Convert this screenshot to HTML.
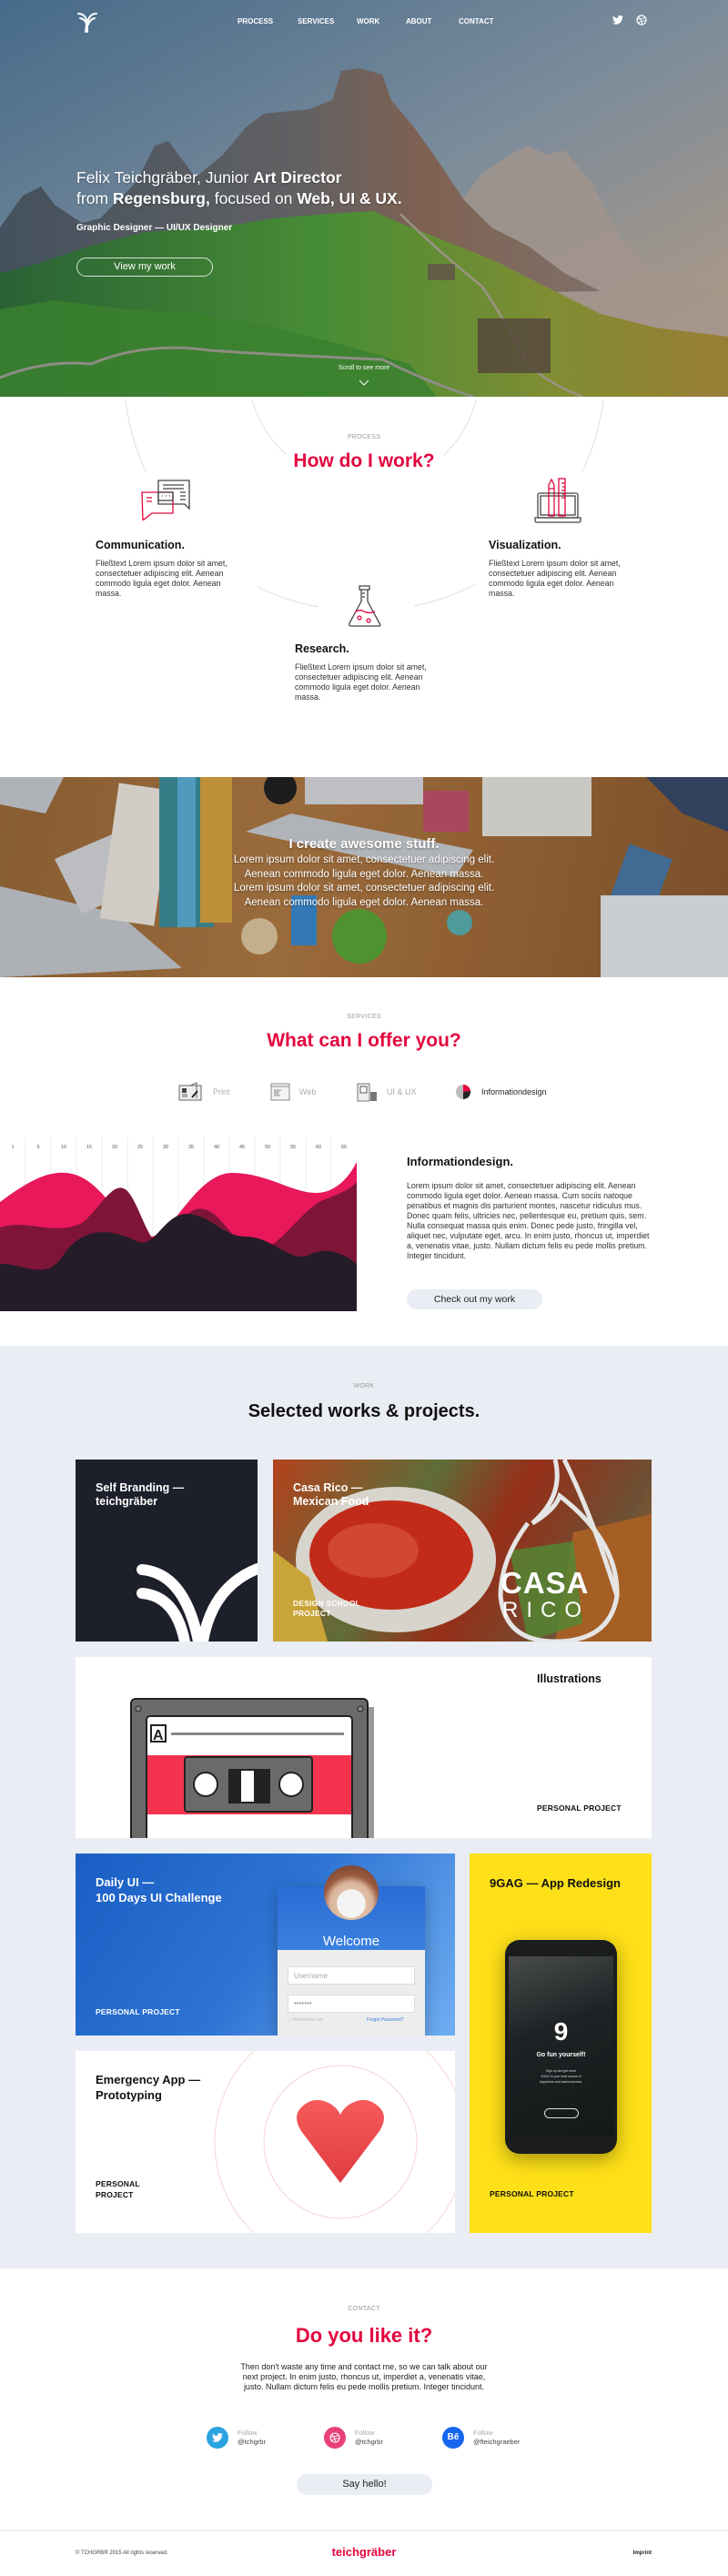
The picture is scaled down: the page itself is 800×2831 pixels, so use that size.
<!DOCTYPE html>
<html><head><meta charset="utf-8">
<style>
*{margin:0;padding:0;box-sizing:border-box}
body{width:800px;height:2831px;position:relative;font-family:"Liberation Sans",sans-serif;background:#fff;overflow:hidden;color:#222}
.a{position:absolute}
.lbl{position:absolute;left:0;width:800px;text-align:center;font-size:7px;color:#9a9a9a;letter-spacing:.3px}
.h2{position:absolute;left:0;width:800px;text-align:center;font-size:21px;font-weight:bold;color:#e3063f}
.t{font-size:12.5px;font-weight:bold;color:#111}
.p{font-size:8.8px;line-height:11px;color:#333}
.nav{position:absolute;top:19px;font-size:8px;font-weight:bold;color:#fff}
.ct{position:absolute;font-size:12.5px;font-weight:bold;line-height:15px}
.pp{position:absolute;font-size:8.5px;font-weight:bold;letter-spacing:.2px}
</style></head><body>

<!-- HERO -->
<div class="a" style="left:0;top:0;width:800px;height:436px;overflow:hidden">
<svg width="800" height="436" viewBox="0 0 800 436">
<defs>
<linearGradient id="sky" x1="0" y1="0" x2="1" y2="1"><stop offset="0" stop-color="#4d7497"/><stop offset=".5" stop-color="#8598a8"/><stop offset="1" stop-color="#c9a98e"/></linearGradient>
<linearGradient id="rock" x1="0" y1="0" x2="1" y2="0"><stop offset="0" stop-color="#4a5866"/><stop offset=".5" stop-color="#6a6a6c"/><stop offset=".7" stop-color="#8a6a5a"/><stop offset="1" stop-color="#8a7a72"/></linearGradient>
<linearGradient id="gr" x1="0" y1="0" x2="1" y2="0"><stop offset="0" stop-color="#2e6a3a"/><stop offset=".45" stop-color="#4e9a3a"/><stop offset=".75" stop-color="#8a9a38"/><stop offset="1" stop-color="#a8883a"/></linearGradient>
</defs>
<rect width="800" height="436" fill="url(#sky)"/>
<path d="M470 250 L500 230 L530 190 L560 170 L580 160 L600 170 L620 165 L650 200 L680 260 L720 300 L760 310 L800 330 L800 436 L470 436Z" fill="#b2a298" opacity=".75"/>
<path d="M0 250 L25 215 L45 205 L60 225 L90 245 L110 240 L150 200 L170 160 L185 155 L200 175 L215 195 L245 170 L270 140 L290 125 L340 120 L365 110 L375 78 L395 75 L420 82 L430 110 L455 140 L480 175 L510 220 L540 250 L580 270 L620 300 L660 320 L0 330Z" fill="url(#rock)"/>
<path d="M0 300 L40 290 L100 270 L160 255 L240 250 L300 240 L360 235 L410 232 L440 245 L490 265 L540 285 L600 315 L660 345 L720 360 L800 370 L800 436 L0 436Z" fill="url(#gr)"/>
<path d="M0 340 L60 330 L140 340 L220 345 L300 360 L380 380 L450 400 L480 436 L0 436Z" fill="#3f8c34" opacity=".85"/>
<path d="M0 415 Q50 395 100 400 Q160 375 230 385 Q300 390 420 395 Q470 420 520 436" stroke="#9a9a90" stroke-width="3" fill="none"/>
<path d="M440 235 Q480 275 530 315 Q560 360 580 400 Q600 420 640 436" stroke="#a8a090" stroke-width="2.5" fill="none"/>
<rect x="525" y="350" width="80" height="60" fill="#5a4a40" opacity=".8"/>
<rect x="470" y="290" width="30" height="18" fill="#6a5a50" opacity=".8"/>
<rect width="800" height="436" fill="#000" opacity=".08"/>
</svg>
</div>
<svg class="a" style="left:84px;top:11px" width="24" height="25" viewBox="0 0 24 25"><path d="M2 4 Q10 4 12 14 M4 9 Q10 10 11 16 L10 24 M22 4 Q14 4 12 14 L12 24 M20 9 Q15 10 13 16" stroke="#fff" stroke-width="2" fill="none" stroke-linecap="round"/></svg>
<div class="nav" style="left:261px">PROCESS</div>
<div class="nav" style="left:327px">SERVICES</div>
<div class="nav" style="left:392px">WORK</div>
<div class="nav" style="left:446px">ABOUT</div>
<div class="nav" style="left:504px">CONTACT</div>
<svg class="a" style="left:673px;top:17px" width="12" height="10" viewBox="0 0 24 20"><path d="M24 2.4a10 10 0 0 1-2.8.8A5 5 0 0 0 23.3.4a10 10 0 0 1-3.1 1.2A4.9 4.9 0 0 0 11.8 6 14 14 0 0 1 1.7.9a4.9 4.9 0 0 0 1.5 6.6 4.9 4.9 0 0 1-2.2-.6A4.9 4.9 0 0 0 4.9 11.7a5 5 0 0 1-2.2.1 4.9 4.9 0 0 0 4.6 3.4A9.9 9.9 0 0 1 0 17.2 14 14 0 0 0 7.5 19.4c9.1 0 14-7.5 14-14v-.6A10 10 0 0 0 24 2.4z" fill="#fff"/></svg>
<svg class="a" style="left:699px;top:16px" width="12" height="12" viewBox="0 0 12 12"><circle cx="6" cy="6" r="5" stroke="#fff" stroke-width="1.2" fill="none"/><path d="M3 2.5 Q6 6 7 11 M1.2 5 Q6 5.5 10 3 M2.5 9.5 Q6 6 10.8 7" stroke="#fff" stroke-width=".9" fill="none"/></svg>

<div class="a" style="left:84px;top:184px;font-size:17.5px;line-height:23px;color:#fff;text-shadow:0 1px 2px rgba(0,0,0,.3)">Felix Teichgräber, Junior <b>Art Director</b><br>from <b>Regensburg,</b> focused on <b>Web, UI &amp; UX.</b></div>
<div class="a" style="left:84px;top:245px;font-size:10px;font-weight:bold;color:#fff">Graphic Designer — UI/UX Designer</div>
<div class="a" style="left:84px;top:283px;width:150px;height:21px;border:1px solid rgba(255,255,255,.8);border-radius:11px;color:#fff;font-size:11px;text-align:center;line-height:19px">View my work</div>
<div class="a" style="left:0;width:800px;top:401px;text-align:center;font-size:7px;color:#fff">Scroll to see more</div>
<svg class="a" style="left:394px;top:417px" width="12" height="7" viewBox="0 0 12 7"><path d="M1 1 L6 6 L11 1" stroke="#fff" stroke-width="1" fill="none"/></svg>

<!-- PROCESS -->
<svg class="a" style="left:0;top:436px" width="800" height="300" viewBox="0 436 800 300">
<g stroke="#e4e4e4" stroke-width="1.2" fill="none">
<path d="M138 440 A264 264 0 0 0 160 518"/>
<path d="M663 440 A264 264 0 0 1 640 518"/>
<path d="M283 645 A264 264 0 0 0 350 667"/>
<path d="M455 666 A264 264 0 0 0 523 642"/>
<path d="M277 440 A128 128 0 0 0 315 500"/>
<path d="M523 440 A128 128 0 0 1 488 500"/>
</g></svg>
<div class="lbl" style="top:477px">PROCESS</div>
<div class="h2" style="top:495px">How do I work?</div>
<svg class="a" style="left:155px;top:527px" width="56" height="45" viewBox="0 0 56 45"><g fill="none" stroke-width="1.3"><path d="M19 1 H53 V32 L48 27 H19Z" stroke="#444"/><path d="M24 6 H47 M24 10 H47 M43 14 H49 M43 18 H49 M43 22 H49" stroke="#444"/><path d="M1 14 H35 V37 H12 L2 45 Z" stroke="#e3063f"/><path d="M6 20 H12 M6 24 H12" stroke="#e3063f"/><rect x="19" y="14" width="16" height="9" stroke="#444"/><path d="M23 18 H24 M27 18 H28 M31 18 H32" stroke="#444"/></g></svg>
<svg class="a" style="left:587px;top:525px" width="52" height="50" viewBox="0 0 52 50"><g fill="none" stroke-width="1.3"><rect x="4" y="17" width="44" height="27" rx="2" stroke="#444"/><rect x="7" y="20" width="38" height="21" stroke="#444"/><path d="M1 44 H51 V47 Q51 49 49 49 H3 Q1 49 1 47Z" stroke="#444"/><path d="M16 8 L19 2 L22 8 V42 H16Z M16 12 H22" stroke="#e3063f"/><rect x="27" y="1" width="7" height="41" stroke="#e3063f"/><path d="M30 6 H34 M31 10 H34 M30 14 H34 M31 18 H34 M30 22 H34" stroke="#e3063f"/></g></svg>
<svg class="a" style="left:382px;top:643px" width="38" height="47" viewBox="0 0 38 47"><g fill="none" stroke-width="1.3"><path d="M13 1 H24 V5 H13Z" stroke="#444"/><path d="M15 5 V18 L2 42 Q1 45 4 45 H34 Q37 45 35 42 L22 18 V5" stroke="#444"/><path d="M16 9 H19 M16 13 H19" stroke="#444"/><path d="M8 30 Q13 26 18 29 Q24 32 30 29" stroke="#e3063f"/><circle cx="13" cy="36" r="2" stroke="#e3063f"/><circle cx="23" cy="39" r="2" stroke="#e3063f"/></g></svg>
<div class="a t" style="left:105px;top:592px">Communication.</div>
<div class="a p" style="left:105px;top:614px;width:160px">Fließtext Lorem ipsum dolor sit amet, consectetuer adipiscing elit. Aenean commodo ligula eget dolor. Aenean massa.</div>
<div class="a t" style="left:537px;top:592px">Visualization.</div>
<div class="a p" style="left:537px;top:614px;width:160px">Fließtext Lorem ipsum dolor sit amet, consectetuer adipiscing elit. Aenean commodo ligula eget dolor. Aenean massa.</div>
<div class="a t" style="left:324px;top:706px">Research.</div>
<div class="a p" style="left:324px;top:728px;width:160px">Fließtext Lorem ipsum dolor sit amet, consectetuer adipiscing elit. Aenean commodo ligula eget dolor. Aenean massa.</div>

<!-- DESK PHOTO -->
<div class="a" style="left:0;top:854px;width:800px;height:220px;overflow:hidden;background:linear-gradient(100deg,#9a6a3a,#b07a44 40%,#a06a38 70%,#8a5a30)">
<svg width="800" height="220" viewBox="0 0 800 220">
<path d="M0 0 L70 0 L50 40 L0 30Z" fill="#c8ccd2"/>
<path d="M0 120 L130 150 L200 210 L0 220Z" fill="#c5c9cf"/>
<path d="M60 90 L130 60 L160 120 L90 150Z" fill="#d6d8dc"/>
<rect x="120" y="10" width="60" height="150" fill="#eeeae2" transform="rotate(8 150 85)"/>
<rect x="175" y="0" width="60" height="165" fill="#3f8f9a"/>
<rect x="195" y="0" width="20" height="165" fill="#5ab0d8"/>
<rect x="220" y="0" width="35" height="160" fill="#d9a640"/>
<circle cx="308" cy="12" r="18" fill="#222"/>
<rect x="335" y="0" width="130" height="30" fill="#d9dade"/>
<path d="M270 60 L320 40 L520 80 L500 110Z" fill="#c9ccd1"/>
<rect x="530" y="0" width="120" height="65" fill="#e6e4de"/>
<rect x="465" y="15" width="50" height="45" fill="#c84a7a" opacity=".8"/>
<rect x="680" y="80" width="50" height="60" fill="#4a7aa8" transform="rotate(20 705 110)"/>
<path d="M710 0 L800 0 L800 60 L750 40Z" fill="#3a4a6a"/>
<rect x="660" y="130" width="140" height="90" fill="#e6eaf0"/>
<circle cx="395" cy="175" r="30" fill="#5aa838"/>
<rect x="320" y="130" width="28" height="55" fill="#3a8ad0"/>
<circle cx="285" cy="175" r="20" fill="#e0c8a0"/>
<circle cx="505" cy="160" r="14" fill="#5ab0b0"/>
<rect width="800" height="220" fill="#000" opacity=".12"/>
</svg>
</div>
<div class="a" style="left:0;top:919px;width:800px;text-align:center;color:#fff;font-size:15px;font-weight:bold;text-shadow:0 1px 2px rgba(0,0,0,.4)">I create awesome stuff.</div>
<div class="a" style="left:0;top:938px;width:800px;text-align:center;color:#fff;font-size:11.5px;line-height:15.5px;text-shadow:0 1px 2px rgba(0,0,0,.4)">Lorem ipsum dolor sit amet, consectetuer adipiscing elit.<br>Aenean commodo ligula eget dolor. Aenean massa.<br>Lorem ipsum dolor sit amet, consectetuer adipiscing elit.<br>Aenean commodo ligula eget dolor. Aenean massa.</div>

<!-- SERVICES -->
<div class="lbl" style="top:1114px">SERVICES</div>
<div class="h2" style="top:1132px">What can I offer you?</div>
<svg class="a" style="left:196px;top:1189px" width="26" height="21" viewBox="0 0 26 21"><rect x="1" y="4" width="24" height="16" fill="#eee" stroke="#666"/><rect x="4" y="7" width="5" height="5" fill="#444"/><path d="M4 14 H10 M4 16 H10 M13 4 L20 1 V18" stroke="#666" fill="none"/><path d="M15 17 L21 10" stroke="#222" stroke-width="2"/></svg>
<div class="a" style="left:234px;top:1195px;font-size:9px;color:#aaa">Print</div>
<svg class="a" style="left:297px;top:1190px" width="22" height="20" viewBox="0 0 22 20"><rect x="1" y="1" width="20" height="18" fill="#f4f4f4" stroke="#888"/><path d="M1 4 H21 M4 8 H12 M4 10 H10 M4 12 H9 M4 14 H11" stroke="#888" fill="none"/></svg>
<div class="a" style="left:329px;top:1195px;font-size:9px;color:#aaa">Web</div>
<svg class="a" style="left:392px;top:1190px" width="23" height="21" viewBox="0 0 23 21"><rect x="1" y="1" width="13" height="19" fill="#eee" stroke="#777"/><rect x="4" y="4" width="7" height="7" fill="#fff" stroke="#555"/><rect x="15" y="10" width="7" height="10" fill="#777"/></svg>
<div class="a" style="left:425px;top:1195px;font-size:9px;color:#aaa">UI &amp; UX</div>
<svg class="a" style="left:500px;top:1190px" width="18" height="20" viewBox="0 0 18 20"><circle cx="9" cy="10" r="8" fill="#bbb"/><path d="M9 10 L9 2 A8 8 0 0 1 17 9Z" fill="#e3063f"/><path d="M9 10 L17 9 A8 8 0 0 1 9 18Z" fill="#222"/></svg>
<div class="a" style="left:529px;top:1195px;font-size:9px;color:#222">Informationdesign</div>

<svg class="a" style="left:0;top:1249px" width="392" height="192" viewBox="0 0 392 192">
<rect width="392" height="192" fill="#fff"/>
<g stroke="#ececec" stroke-width="1"><path d="M28 0V192M56 0V192M84 0V192M112 0V192M140 0V192M168 0V192M196 0V192M224 0V192M252 0V192M280 0V192M308 0V192M336 0V192M364 0V192"/></g>
<g font-size="5.5" fill="#555" text-anchor="middle" font-family="Liberation Sans"><text x="14" y="13">1</text><text x="42" y="13">5</text><text x="70" y="13">10</text><text x="98" y="13">15</text><text x="126" y="13">20</text><text x="154" y="13">25</text><text x="182" y="13">30</text><text x="210" y="13">35</text><text x="238" y="13">40</text><text x="266" y="13">45</text><text x="294" y="13">50</text><text x="322" y="13">55</text><text x="350" y="13">60</text><text x="378" y="13">65</text></g>
<path d="M0 72 C30 50 60 30 90 45 C120 60 140 110 165 110 C190 110 215 40 255 40 C300 40 330 70 360 60 C380 52 388 35 392 28 V192 H0Z" fill="#e8185a"/>
<path d="M0 100 C30 90 60 110 90 95 C110 80 125 45 140 60 C150 70 160 105 170 115 C185 115 200 85 215 80 C240 75 250 110 275 125 C300 135 330 80 355 70 C375 62 385 58 392 50 V192 H0Z" fill="#7e1538"/>
<path d="M0 140 C30 140 50 160 70 130 C90 100 120 100 150 115 C170 125 180 85 205 85 C230 85 245 110 270 110 C300 110 320 140 340 130 C360 120 380 130 392 140 V192 H0Z" fill="#241c28"/>
</svg>
<div class="a t" style="left:447px;top:1269px;font-size:13px">Informationdesign.</div>
<div class="a p" style="left:447px;top:1298px;width:275px">Lorem ipsum dolor sit amet, consectetuer adipiscing elit. Aenean commodo ligula eget dolor. Aenean massa. Cum sociis natoque penatibus et magnis dis parturient montes, nascetur ridiculus mus.<br>Donec quam felis, ultricies nec, pellentesque eu, pretium quis, sem. Nulla consequat massa quis enim. Donec pede justo, fringilla vel, aliquet nec, vulputate eget, arcu. In enim justo, rhoncus ut, imperdiet a, venenatis vitae, justo. Nullam dictum felis eu pede mollis pretium. Integer tincidunt.</div>
<div class="a" style="left:447px;top:1417px;width:149px;height:22px;border-radius:11px;background:#eaedf4;text-align:center;line-height:22px;font-size:10.5px;color:#222">Check out my work</div>

<!-- WORK -->
<div class="a" style="left:0;top:1479px;width:800px;height:1014px;background:#eaedf4"></div>
<div class="lbl" style="top:1520px">WORK</div>
<div class="a" style="left:0;width:800px;text-align:center;top:1540px;font-size:20px;font-weight:bold;color:#111">Selected works &amp; projects.</div>

<div class="a" style="left:83px;top:1604px;width:200px;height:200px;background:#1d1f2b;overflow:hidden">
<svg width="200" height="200" viewBox="0 0 200 200"><g stroke="#fff" stroke-width="12" fill="none" stroke-linecap="round"><path d="M73 121 Q120 125 135 200"/><path d="M73 147 Q110 150 120 200"/><path d="M200 120 Q150 140 140 200"/></g></svg>
<div class="ct" style="left:22px;top:24px;color:#fff">Self Branding —<br>teichgräber</div>
</div>

<div class="a" style="left:300px;top:1604px;width:416px;height:200px;overflow:hidden;background:linear-gradient(120deg,#c84a20,#6a7a40 35%,#a8341c 55%,#7a5a3a 80%,#a87a4a)">
<svg width="416" height="200" viewBox="0 0 416 200">
<ellipse cx="135" cy="110" rx="110" ry="80" fill="#f0ede4"/>
<ellipse cx="130" cy="105" rx="90" ry="60" fill="#d8301c"/>
<ellipse cx="110" cy="100" rx="50" ry="30" fill="#e8503a"/>
<path d="M0 100 L40 130 L60 200 L0 200Z" fill="#e0b840"/>
<path d="M330 80 L416 60 L416 200 L310 200Z" fill="#b86a2a"/>
<path d="M260 100 L330 90 L340 180 L280 200Z" fill="#5a9a3a" opacity=".8"/>
<path d="M310 0 Q320 40 285 70 Q310 55 315 40 Q380 90 378 150 Q370 200 310 200 Q255 200 250 150 Q250 110 280 70" stroke="#fff" stroke-width="5" fill="none"/>
<path d="M320 0 Q350 60 378 150" stroke="#fff" stroke-width="5" fill="none"/>
<rect width="416" height="200" fill="#000" opacity=".1"/>
</svg>
<div class="a" style="left:250px;top:117px;color:#fff;font-size:33px;font-weight:bold;letter-spacing:1px">CASA</div>
<div class="a" style="left:252px;top:152px;color:#fff;font-size:24px;letter-spacing:9px">RICO</div>
<div class="ct" style="left:22px;top:24px;color:#fff">Casa Rico —<br>Mexican Food</div>
<div class="pp" style="left:22px;top:153px;color:#fff;line-height:11px">DESIGN SCHOOL<br>PROJECT</div>
</div>

<div class="a" style="left:83px;top:1821px;width:633px;height:199px;background:#fff;overflow:hidden">
<svg class="a" style="left:60px;top:45px" width="275" height="160" viewBox="0 0 275 160"><rect x="1" y="1" width="260" height="160" rx="5" fill="#6a6a6a" stroke="#222" stroke-width="2"/><rect x="262" y="10" width="6" height="150" fill="#999"/><circle cx="9" cy="12" r="3" fill="#888" stroke="#222"/><circle cx="253" cy="12" r="3" fill="#888" stroke="#222"/><rect x="18" y="20" width="226" height="140" rx="4" fill="#fff" stroke="#222" stroke-width="2"/><rect x="19" y="63" width="224" height="65" fill="#f4344f"/><rect x="23" y="30" width="16" height="18" fill="#fff" stroke="#222" stroke-width="2"/><text x="25" y="46" font-size="16" font-weight="bold" font-family="Liberation Sans" fill="#222">A</text><rect x="45" y="38" width="190" height="3" fill="#888"/><rect x="60" y="65" width="140" height="60" rx="3" fill="#6a6a6a" stroke="#222" stroke-width="2"/><circle cx="83" cy="95" r="13" fill="#fff" stroke="#222" stroke-width="2"/><circle cx="177" cy="95" r="13" fill="#fff" stroke="#222" stroke-width="2"/><rect x="108" y="78" width="46" height="38" fill="#222"/><rect x="122" y="80" width="14" height="34" fill="#fff"/></svg>
<div class="a" style="left:507px;top:17px;font-size:12.5px;font-weight:bold;color:#111">Illustrations</div>
<div class="pp" style="left:507px;top:161px;color:#111">PERSONAL PROJECT</div>
</div>

<div class="a" style="left:83px;top:2037px;width:417px;height:200px;overflow:hidden;background:linear-gradient(125deg,#1a5ec4,#2e74d4 50%,#70aef2)">
<div class="a" style="left:222px;top:36px;width:162px;height:170px;background:#ededed;box-shadow:0 4px 16px rgba(0,0,0,.25)"></div>
<div class="a" style="left:222px;top:36px;width:162px;height:70px;background:linear-gradient(#2a6cd4,#3a80e0)"></div>
<div class="a" style="left:273px;top:13px;width:60px;height:60px;border-radius:50%;background:radial-gradient(circle at 50% 70%,#f4f4f4 30%,#e0c0a8 31%,#d8b49a 45%,#9a5a40 60%,#6a3a2a)"></div>
<div class="a" style="left:222px;top:88px;width:162px;text-align:center;color:#fff;font-size:15px">Welcome</div>
<div class="a" style="left:233px;top:124px;width:140px;height:20px;background:#fff;border:1px solid #ddd;font-size:8px;color:#aaa;padding:5px 6px">Username</div>
<div class="a" style="left:233px;top:155px;width:140px;height:20px;background:#fff;border:1px solid #ddd;font-size:8px;color:#999;padding:4px 6px">•••••••</div>
<div class="a" style="left:233px;top:180px;font-size:5px;color:#bbb">▢ Remember me</div>
<div class="a" style="left:320px;top:180px;font-size:5px;color:#3a80e0">Forgot Password?</div>
<div class="ct" style="left:22px;top:23px;color:#fff;font-size:13px;line-height:17px">Daily UI —<br>100 Days UI Challenge</div>
<div class="pp" style="left:22px;top:169px;color:#fff">PERSONAL PROJECT</div>
</div>

<div class="a" style="left:516px;top:2037px;width:200px;height:417px;background:#fde018;overflow:hidden">
<div class="a" style="left:39px;top:95px;width:123px;height:235px;border-radius:16px;background:#1a1c1e;box-shadow:0 6px 20px rgba(0,0,0,.35)"></div>
<div class="a" style="left:43px;top:113px;width:115px;height:198px;background:linear-gradient(160deg,#4a4c4c,#1e2224 40%,#141818)"></div>
<div class="a" style="left:43px;top:180px;width:115px;text-align:center;color:#fff;font-size:28px;font-weight:bold">9</div>
<div class="a" style="left:43px;top:218px;width:115px;text-align:center;color:#fff;font-size:7px;font-weight:bold">Go fun yourself!</div>
<div class="a" style="left:43px;top:236px;width:115px;text-align:center;color:#ddd;font-size:3.5px;line-height:6px">Sign up and get more<br>9GAG is your best source of<br>happiness and awesomeness.</div>
<div class="a" style="left:82px;top:280px;width:38px;height:11px;border:1px solid #ddd;border-radius:6px"></div>
<div class="ct" style="left:22px;top:25px;color:#111;font-size:13px">9GAG — App Redesign</div>
<div class="pp" style="left:22px;top:369px;color:#111">PERSONAL PROJECT</div>
</div>

<div class="a" style="left:83px;top:2254px;width:417px;height:200px;background:#fff;overflow:hidden">
<svg width="417" height="200" viewBox="0 0 417 200"><circle cx="291" cy="100" r="84" fill="none" stroke="#f6d4d4"/><circle cx="291" cy="100" r="138" fill="none" stroke="#f6d4d4"/>
<defs><linearGradient id="hg" x1="0" y1="0" x2="0" y2="1"><stop offset="0" stop-color="#f65a5a"/><stop offset="1" stop-color="#e03c40"/></linearGradient></defs>
<path d="M291 145 L248 88 Q238 72 248 62 Q262 48 280 58 Q288 63 291 70 Q294 63 302 58 Q320 48 334 62 Q344 72 334 88Z" fill="url(#hg)"/></svg>
<div class="ct" style="left:22px;top:23px;color:#111;font-size:13px;line-height:17px">Emergency App —<br>Prototyping</div>
<div class="pp" style="left:22px;top:141px;color:#111;line-height:11.5px">PERSONAL<br>PROJECT</div>
</div>

<!-- CONTACT -->
<div class="lbl" style="top:2534px">CONTACT</div>
<div class="h2" style="top:2554px;font-size:22px">Do you like it?</div>
<div class="a p" style="left:263px;top:2596px;width:274px;text-align:center;color:#222;font-size:9px">Then don't waste any time and contact me, so we can talk about our next project. In enim justo, rhoncus ut, imperdiet a, venenatis vitae, justo. Nullam dictum felis eu pede mollis pretium. Integer tincidunt.</div>
<div class="a" style="left:227px;top:2667px;width:24px;height:24px;border-radius:50%;background:#2aa3e0"></div>
<svg class="a" style="left:233px;top:2674px" width="12" height="10" viewBox="0 0 24 20"><path d="M24 2.4a10 10 0 0 1-2.8.8A5 5 0 0 0 23.3.4a10 10 0 0 1-3.1 1.2A4.9 4.9 0 0 0 11.8 6 14 14 0 0 1 1.7.9a4.9 4.9 0 0 0 1.5 6.6 4.9 4.9 0 0 1-2.2-.6A4.9 4.9 0 0 0 4.9 11.7a5 5 0 0 1-2.2.1 4.9 4.9 0 0 0 4.6 3.4A9.9 9.9 0 0 1 0 17.2 14 14 0 0 0 7.5 19.4c9.1 0 14-7.5 14-14v-.6A10 10 0 0 0 24 2.4z" fill="#fff"/></svg>
<div class="a" style="left:356px;top:2667px;width:24px;height:24px;border-radius:50%;background:#e8407a"></div>
<svg class="a" style="left:362px;top:2673px" width="12" height="12" viewBox="0 0 12 12"><circle cx="6" cy="6" r="5" stroke="#fff" stroke-width="1.1" fill="none"/><path d="M3 2.5 Q6 6 7 11 M1.2 5 Q6 5.5 10 3 M2.5 9.5 Q6 6 10.8 7" stroke="#fff" stroke-width=".9" fill="none"/></svg>
<div class="a" style="left:486px;top:2667px;width:24px;height:24px;border-radius:50%;background:#1766f0;color:#fff;font-size:10px;font-weight:bold;text-align:center;line-height:24px">Bē</div>
<div class="a" style="left:261px;top:2669px;font-size:7.5px;line-height:10px;color:#aaa">Follow<br><span style="color:#444">@tchgrbr</span></div>
<div class="a" style="left:390px;top:2669px;font-size:7.5px;line-height:10px;color:#aaa">Follow<br><span style="color:#444">@tchgrbr</span></div>
<div class="a" style="left:520px;top:2669px;font-size:7.5px;line-height:10px;color:#aaa">Follow<br><span style="color:#444">@fteichgraeber</span></div>
<div class="a" style="left:326px;top:2719px;width:149px;height:23px;border-radius:11px;background:#eaedf4;text-align:center;line-height:23px;font-size:11px;color:#222">Say hello!</div>
<div class="a" style="left:0;top:2780px;width:800px;height:2px;background:#f0f1f5"></div>
<div class="a" style="left:83px;top:2803px;font-size:6px;color:#444">© TCHGRBR 2015 All rights reserved.</div>
<div class="a" style="left:0;width:800px;top:2797px;text-align:center;font-size:13px;font-weight:bold;color:#e3063f">teichgräber</div>
<div class="a" style="left:690px;top:2803px;width:26px;text-align:right;font-size:6px;font-weight:bold;color:#222">Imprint</div>
</body></html>
